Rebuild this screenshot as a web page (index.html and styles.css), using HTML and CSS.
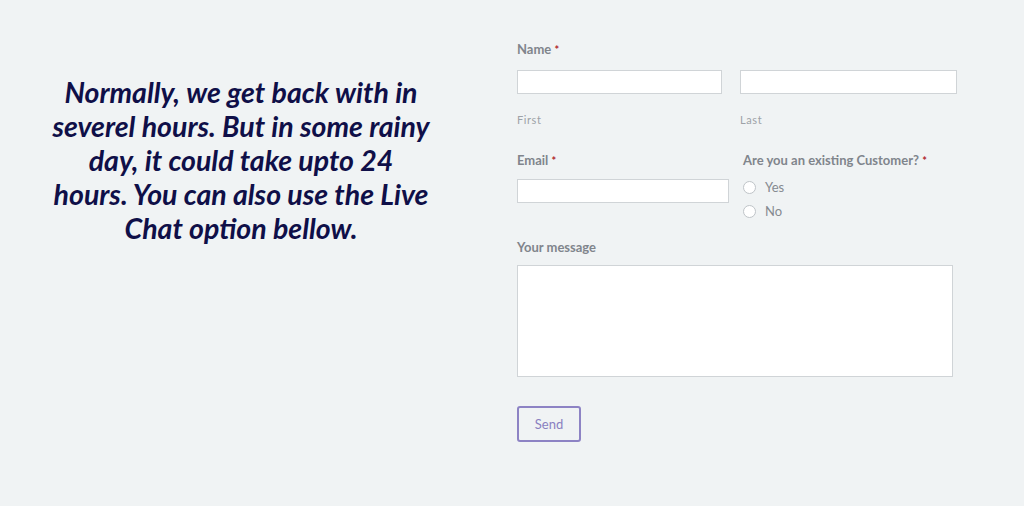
FILE: index.html
```html
<!DOCTYPE html>
<html lang="en">
<head>
<meta charset="utf-8">
<title>Contact</title>
<link rel="stylesheet" href="styles.css">
</head>
<body>
<main class="page">
  <section class="intro">
    <h2 class="intro-text">Normally, we get back with in severel hours. But in some rainy day, it could take upto 24 hours. You can also use the Live Chat option bellow.</h2>
  </section>
  <form class="form">
    <div class="field">
      <div class="label">Name <span class="req">*</span></div>
      <div class="name-row">
        <div class="sub">
          <input class="input" type="text">
          <div class="sublabel">First</div>
        </div>
        <div class="sub">
          <input class="input" type="text">
          <div class="sublabel">Last</div>
        </div>
      </div>
    </div>
    <div class="row2">
      <div class="field email">
        <div class="label">Email <span class="req">*</span></div>
        <input class="input" type="email">
      </div>
      <div class="field customer">
        <div class="label">Are you an existing Customer? <span class="req">*</span></div>
        <label class="radio"><span class="circle"></span>Yes</label>
        <label class="radio"><span class="circle"></span>No</label>
      </div>
    </div>
    <div class="field msg">
      <div class="label">Your message</div>
      <div class="textarea"></div>
    </div>
    <button class="send" type="button">Send</button>
  </form>
</main>
</body>
</html>
```
FILE: styles.css
```css
html, body {
  margin: 0;
  padding: 0;
  background: #f0f3f4;
  font-family: Lato, "Open Sans", sans-serif;
}
.page {
  display: flex;
  width: 1024px;
  height: 506px;
}
.intro {
  width: 380px;
  padding: 75px 0 0 51px;
  box-sizing: content-box;
  flex: none;
}
.intro-text {
  margin: 0;
  font-size: 28.5px;
  line-height: 34px;
  font-style: italic;
  font-weight: 700;
  color: #0f0f48;
  text-align: center;
}
.form {
  margin-left: 86px;
  padding-top: 40px;
  width: 440px;
}
.label {
  font-size: 13px;
  font-weight: 700;
  color: #80858c;
  line-height: 18px;
  margin-bottom: 11px;
}
.req {
  color: #b0272d;
  font-size: 11px;
}
.name-row {
  display: grid;
  grid-template-columns: 205px 217px;
  column-gap: 18px;
}
.input {
  display: block;
  box-sizing: border-box;
  width: 100%;
  height: 24px;
  margin: 0;
  border: 1px solid #d0d4d7;
  background: #fff;
  border-radius: 0;
}
.sublabel {
  font-size: 11px;
  letter-spacing: 0.6px;
  color: #9da2a7;
  line-height: 14px;
  margin-top: 19px;
}
.row2 {
  display: grid;
  grid-template-columns: 212px 1fr;
  column-gap: 14px;
  margin-top: 24px;
}
.email .label {
  margin-bottom: 9px;
}
.customer .label {
  margin-bottom: 5px;
}
.radio {
  display: flex;
  align-items: center;
  gap: 9px;
  font-size: 13px;
  color: #858a90;
  height: 24px;
}
.circle {
  width: 11px;
  height: 11px;
  border: 1px solid #bfc4c8;
  border-radius: 50%;
  background: #fff;
}
.msg {
  margin-top: 15px;
}
.msg .label {
  margin-bottom: 9px;
}
.textarea {
  width: 436px;
  height: 112px;
  box-sizing: border-box;
  border: 1px solid #d0d4d7;
  background: #fff;
}
.send {
  display: block;
  margin-top: 29px;
  width: 64px;
  height: 36px;
  border: 2px solid #8d83c4;
  border-radius: 3px;
  background: transparent;
  color: #8a80c0;
  font-family: Lato, sans-serif;
  font-size: 13px;
  padding: 0;
}
```
